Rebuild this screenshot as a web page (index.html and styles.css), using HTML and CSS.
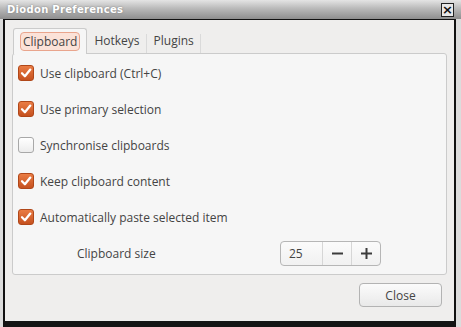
FILE: index.html
```html
<!DOCTYPE html>
<html lang="en">
<head>
  <meta charset="UTF-8" />
  <title>Diodon Preferences</title>
  <link rel="stylesheet" href="styles.css">
</head>
<body>
<div class="titlebar">
  <span class="title">Diodon Preferences</span>
  <span class="close-x">&#215;</span>
</div>

<div class="frame">
  <div class="tabs">
    <div class="tab active"><span class="focus">Clipboard</span></div>
    <div class="tab">Hotkeys</div>
    <div class="tab">Plugins</div>
  </div>

  <div class="panel">
    <label class="row"><span class="check on"><svg viewBox="0 0 16 16" width="16" height="16"><path d="M4 8.3 L6.9 11.2 L12.3 4.6" fill="none" stroke="#fff" stroke-width="2.3" stroke-linecap="round" stroke-linejoin="round"/></svg></span>Use clipboard (Ctrl+C)</label>
    <label class="row"><span class="check on"><svg viewBox="0 0 16 16" width="16" height="16"><path d="M4 8.3 L6.9 11.2 L12.3 4.6" fill="none" stroke="#fff" stroke-width="2.3" stroke-linecap="round" stroke-linejoin="round"/></svg></span>Use primary selection</label>
    <label class="row"><span class="check"></span>Synchronise clipboards</label>
    <label class="row"><span class="check on"><svg viewBox="0 0 16 16" width="16" height="16"><path d="M4 8.3 L6.9 11.2 L12.3 4.6" fill="none" stroke="#fff" stroke-width="2.3" stroke-linecap="round" stroke-linejoin="round"/></svg></span>Keep clipboard content</label>
    <label class="row"><span class="check on"><svg viewBox="0 0 16 16" width="16" height="16"><path d="M4 8.3 L6.9 11.2 L12.3 4.6" fill="none" stroke="#fff" stroke-width="2.3" stroke-linecap="round" stroke-linejoin="round"/></svg></span>Automatically paste selected item</label>
    <div class="row size-row">
      <span class="size-label">Clipboard size</span>
      <div class="spin">
        <span class="spin-value">25</span>
        <span class="spin-btn"><svg width="11" height="11" viewBox="0 0 11 11"><rect x="0" y="4.5" width="11" height="2" fill="#3c3c3c"/></svg></span>
        <span class="spin-btn"><svg width="11" height="11" viewBox="0 0 11 11"><rect x="0" y="4.5" width="11" height="2" fill="#3c3c3c"/><rect x="4.5" y="0" width="2" height="11" fill="#3c3c3c"/></svg></span>
      </div>
    </div>
  </div>

  <div class="actions">
    <button class="btn">Close</button>
  </div>
</div>
</body>
</html>
```

FILE: styles.css
```css
body { margin: 0; width: 461px; height: 327px; overflow: hidden; background: #dcdcdc; font-family: "Open Sans", "DejaVu Sans", sans-serif; font-size: 12px; color: #444; }
.titlebar { height: 19px; display: flex; align-items: center; justify-content: space-between; padding: 0 7px 0 7px; background: linear-gradient(#e4e4e4, #b9b9b9 45%, #8e8e8e); }
.title { color: #fff; font: bold 10px "DejaVu Sans", sans-serif; letter-spacing: 0.3px; text-shadow: 0 0 2px #777; }
.close-x { width: 11px; height: 12px; border: 1px solid #222; background: #e8e8e8; color: #111; font: bold 13px/12px "DejaVu Sans", sans-serif; text-align: center; }
.frame { width: 449px; height: 301px; margin-left: 3px; border: 2px solid #111; border-top: 1px solid #111; border-bottom: 6px solid #141414; background: #efeeed; display: flex; flex-direction: column; }
.tabs { display: flex; margin: 8px 0 0 8px; height: 25px; position: relative; z-index: 1; }
.tab { padding: 0 7px 0 7px; display: flex; align-items: center; height: 25px; background: linear-gradient(#dadada, #dadada) right 6px / 1px 19px no-repeat; }
.tab.active { padding: 0 6px; background: #f6f6f6; border: 1px solid #cbcbcb; border-bottom: none; border-radius: 3px 3px 0 0; }
.focus { background: #fbe2d8; border: 1px solid #e9a58d; border-radius: 4px; padding: 0 2px; line-height: 17px; }
.panel { margin: 0 7px; height: 219px; border: 1px solid #cbcbcb; border-radius: 3px; background: #f6f6f6; padding: 1px 0 0 5px; }
.row { height: 36px; display: flex; align-items: center; gap: 6px; }
.check { width: 14px; height: 14px; border: 1px solid #a8a8a8; border-radius: 3px; background: linear-gradient(#ffffff, #ececec); display: flex; }
.check.on { border-color: #b04719; background: linear-gradient(#ea7c44, #c5511f); }
.check svg { margin: -1px; }
.size-row { gap: 0; }
.size-label { margin-left: 59px; width: 203px; }
.spin { display: flex; height: 23px; border: 1px solid #b6b6b6; border-radius: 4px; background: linear-gradient(#fbfbfb, #f1f1f1); }
.spin-value { width: 33px; padding-left: 8px; display: flex; align-items: center; border-right: 1px solid #d6d6d6; }
.spin-btn { width: 28px; display: flex; align-items: center; justify-content: center; }
.spin-btn + .spin-btn { border-left: 1px solid #d6d6d6; }
.actions { display: flex; justify-content: flex-end; padding: 8px 12px 0 0; }
.btn { width: 83px; height: 24px; border: 1px solid #b3b3b3; border-radius: 4px; background: linear-gradient(#fbfbfb, #e9e9e9); font-family: "Open Sans", "DejaVu Sans", sans-serif; font-size: 12px; color: #444; }
```
